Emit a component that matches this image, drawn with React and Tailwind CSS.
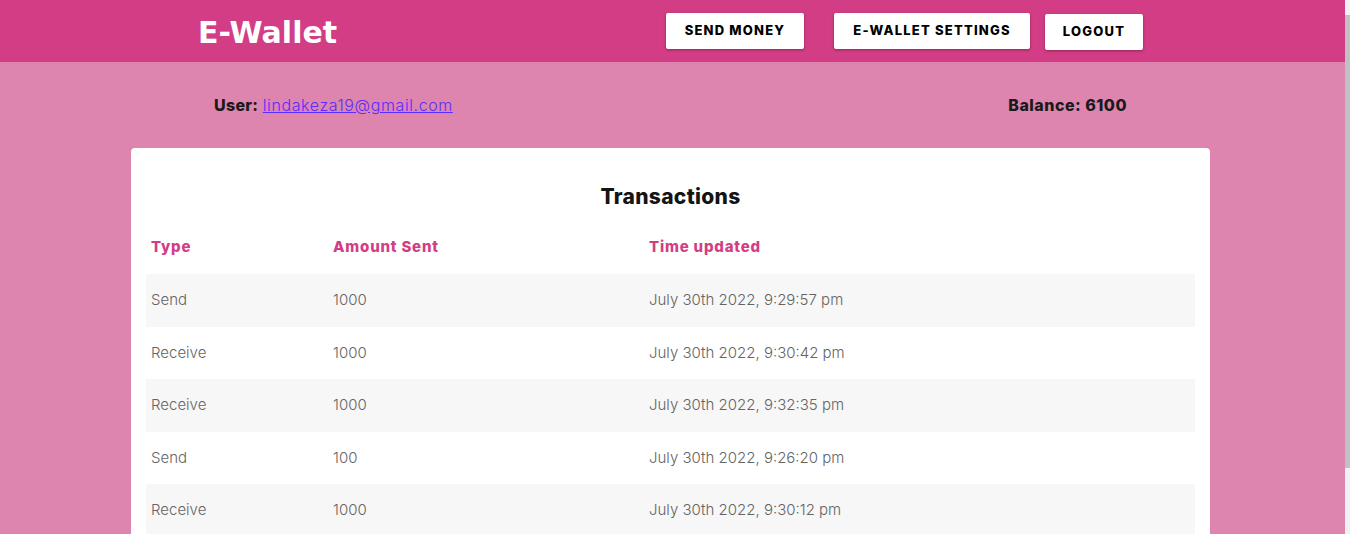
import React from "react";

const rows = [
  ["Send", "1000", "July 30th 2022, 9:29:57 pm"],
  ["Receive", "1000", "July 30th 2022, 9:30:42 pm"],
  ["Receive", "1000", "July 30th 2022, 9:32:35 pm"],
  ["Send", "100", "July 30th 2022, 9:26:20 pm"],
  ["Receive", "1000", "July 30th 2022, 9:30:12 pm"],
  ["Send", "500", "July 30th 2022, 9:35:08 pm"],
];

const btn =
  "h-[36px] bg-white rounded-[2px] shadow-[0_1px_3px_rgba(0,0,0,0.35)] text-[13px] font-extrabold tracking-[1.2px] text-black";

export default function App() {
  return (
    <div
      className="h-[534px] flex overflow-hidden bg-[#dd84af]"
      style={{ fontFamily: "Inter, 'Open Sans', sans-serif" }}
    >
      <div className="flex-1 min-w-0">
        <header className="h-[62px] bg-[#d33d86] flex items-center pl-[198px] pr-[202px]">
          <h1
            className="text-white font-bold text-[30px] leading-none pt-[3px]"
            style={{ fontFamily: "'Comic Sans MS', 'DejaVu Sans', sans-serif" }}
          >
            E-Wallet
          </h1>
          <nav className="ml-auto flex items-center">
            <button className={`${btn} w-[138px]`}>SEND MONEY</button>
            <button className={`${btn} ml-[30px] w-[196px]`}>E-WALLET SETTINGS</button>
            <button className={`${btn} ml-[15px] mt-[2px] w-[98px]`}>LOGOUT</button>
          </nav>
        </header>

        <div className="flex items-center justify-between pl-[214px] pr-[218px] h-[86px] text-[#1a1a1a]">
          <p className="text-[16px]">
            <span className="font-extrabold tracking-[0.3px]">User:</span>{" "}
            <a href="#" className="underline text-[#5b2bff] font-light tracking-[0.6px]">
              lindakeza19@gmail.com
            </a>
          </p>
          <p className="font-extrabold text-[16px] tracking-[0.5px]">Balance: 6100</p>
        </div>

        <main className="ml-[131px] w-[1079px] bg-white rounded-[4px] px-[15px] pb-[15px]">
          <h2 className="text-center text-[21px] font-extrabold tracking-[0.3px] text-[#141414] pt-[36px] pb-[26px] leading-[26px]">
            Transactions
          </h2>
          <table className="w-full text-left border-collapse">
            <thead>
              <tr className="text-[#d33d86] text-[15px] h-[38px]">
                <th className="w-[182px] pl-[5px] font-extrabold tracking-[0.8px] align-top">Type</th>
                <th className="w-[316px] pl-[5px] font-extrabold tracking-[0.8px] align-top">Amount Sent</th>
                <th className="pl-[5px] font-extrabold tracking-[0.8px] align-top">Time updated</th>
              </tr>
            </thead>
            <tbody className="text-[15px] font-light text-[#646464]">
              {rows.map((r, i) => (
                <tr key={i} className={`h-[52.5px] ${i % 2 === 0 ? "bg-[#f7f7f7]" : "bg-white"}`}>
                  <td className="pl-[5px]">{r[0]}</td>
                  <td className="pl-[5px]">{r[1]}</td>
                  <td className="pl-[5px]">{r[2]}</td>
                </tr>
              ))}
            </tbody>
          </table>
        </main>
      </div>
      <aside className="w-[5px] shrink-0 bg-[#f1f1f1] pt-[15px]">
        <div className="h-[453px] bg-[#c1c1c1]" />
      </aside>
    </div>
  );
}
